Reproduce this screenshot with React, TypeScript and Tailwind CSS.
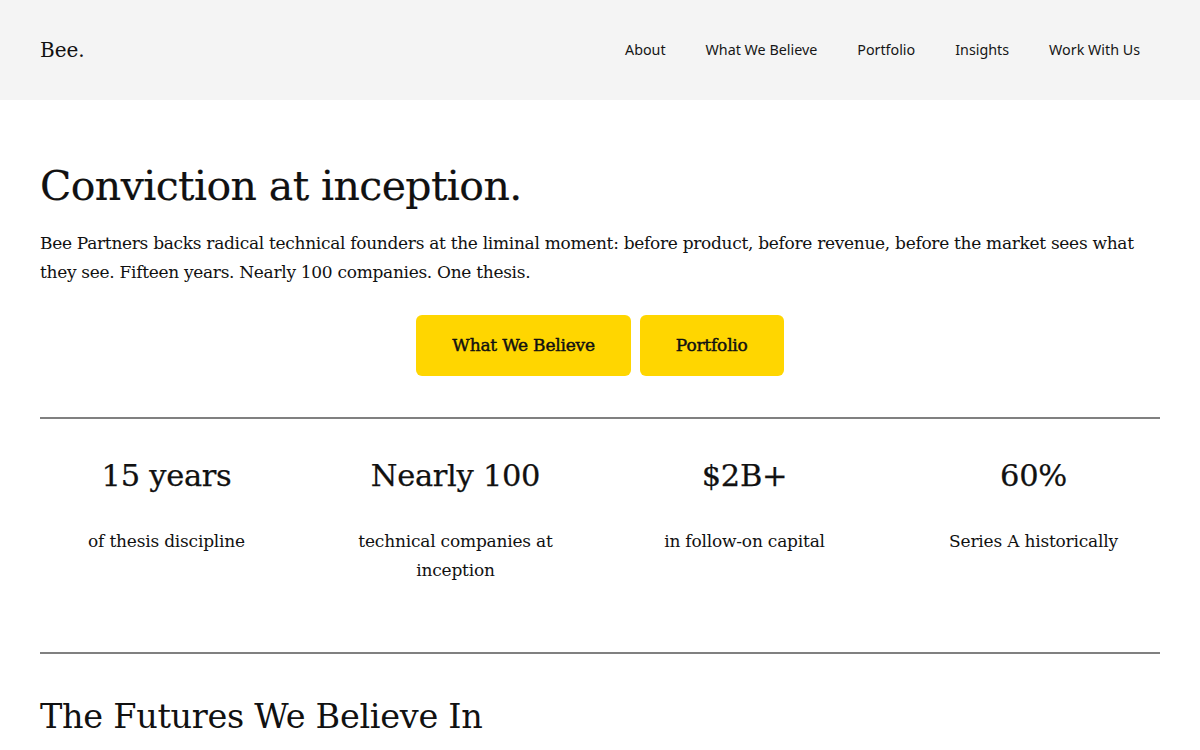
const navLinks = ["About", "What We Believe", "Portfolio", "Insights", "Work With Us"];

const stats = [
  { value: "15 years", label: "of thesis discipline" },
  { value: "Nearly 100", label: "technical companies at inception" },
  { value: "$2B+", label: "in follow-on capital" },
  { value: "60%", label: "Series A historically" },
];

const serif = "font-['DejaVu_Serif',serif]";

export default function App() {
  return (
    <div className={`min-h-screen bg-white text-[#111] ${serif}`}>
      <header className="h-[100px] bg-[#f4f4f4] px-10 flex items-center justify-between">
        <span className="text-[20px]">Bee.</span>
        <nav className="flex items-center font-['Noto_Sans',sans-serif] text-[14.3px] text-[#161616]">
          {navLinks.map((l) => (
            <a key={l} href="#" className="px-5 hover:underline">
              {l}
            </a>
          ))}
        </nav>
      </header>

      <main className="px-10">
        <section className="pt-[62px]">
          <h1 className="text-[41px] leading-[1.2] tracking-[-0.6px] [-webkit-text-stroke:0.2px]">
            Conviction at inception.
          </h1>
          <p className="mt-[18px] text-[17px] leading-[29px] tracking-[-0.3px]">
            Bee Partners backs radical technical founders at the liminal moment: before product, before
            revenue, before the market sees what they see. Fifteen years. Nearly 100 companies. One thesis.
          </p>
          <div className="mt-[28px] flex justify-center gap-[9px]">
            <a href="#" className="h-[61px] px-9 rounded-md bg-[#ffd600] flex items-center text-[17px] tracking-[-0.2px] [-webkit-text-stroke:0.45px]">
              What We Believe
            </a>
            <a href="#" className="h-[61px] px-9 rounded-md bg-[#ffd600] flex items-center text-[17px] tracking-[-0.2px] [-webkit-text-stroke:0.45px]">
              Portfolio
            </a>
          </div>
        </section>

        <section className="mt-[41px] border-t-2 border-[#808080] pt-[37px] pb-[67px]">
          <div className="grid grid-cols-4 gap-9">
            {stats.map((s) => (
              <div key={s.value} className="text-center">
                <div className="text-[30.5px] leading-[40px] tracking-[-0.3px] [-webkit-text-stroke:0.25px]">{s.value}</div>
                <p className="mt-[31px] px-6 text-[17px] leading-[29px] tracking-[-0.2px]">{s.label}</p>
              </div>
            ))}
          </div>
        </section>

        <section className="border-t-2 border-[#808080] pt-[43px]">
          <h2 className="text-[33.5px] leading-[1.2] tracking-[-0.3px]">The Futures We Believe In</h2>
        </section>
      </main>
    </div>
  );
}
